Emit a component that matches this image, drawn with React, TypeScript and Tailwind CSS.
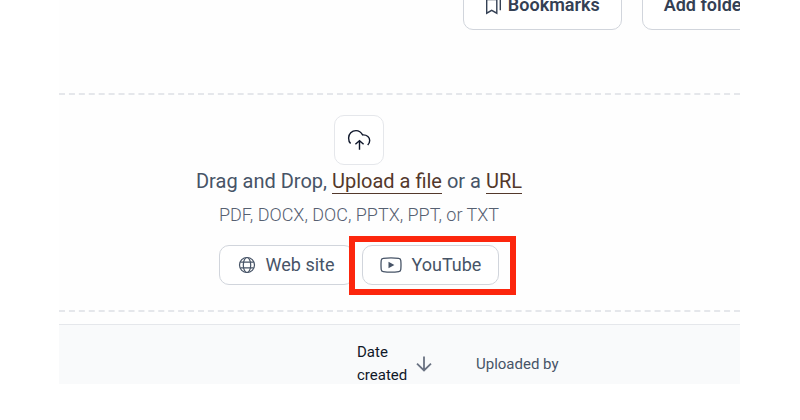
import React from "react";

const CloudUploadIcon = () => (
    <svg width="24" height="24" viewBox="0 0 24 24" fill="none" stroke="currentColor" strokeWidth="1.4" aria-hidden="true">
        <path d="M3.6 15.6C2 14 1.6 12 1.6 9.9C1.6 6.1 4.8 2.6 9 2.6C12.1 2.6 14.2 4.2 15.6 6.9C20.2 6.6 22.7 9.4 22.7 12.4C22.7 14.2 22 15.6 20.7 17" />
        <path d="M12.5 21.8V12.8M8.4 16.2L12.5 12.6L16.6 16.2" />
    </svg>
);

const BookmarksIcon = () => (
    <svg width="17" height="20" viewBox="0 0 17 20" fill="none" stroke="currentColor" strokeWidth="1.4" aria-hidden="true">
        <path d="M1.7 4.5H11.8V18.2L6.7 15.4L1.7 18.2Z" />
        <path d="M4.5 1.7H15.3V15.2" />
    </svg>
);

const GlobeIcon = () => (
    <svg width="18" height="18" viewBox="0 0 18 18" fill="none" stroke="currentColor" strokeWidth="1.2" aria-hidden="true">
        <circle cx="9" cy="9" r="7.5" />
        <ellipse cx="9" cy="9" rx="3.7" ry="7.5" />
        <path d="M2.3 6.2H15.7M2.3 11.8H15.7" />
    </svg>
);

const YouTubeIcon = () => (
    <svg width="22" height="16" viewBox="0 0 22 16" fill="none" stroke="currentColor" strokeWidth="1.3" aria-hidden="true">
        <path d="M3.2 1.4Q11 .3 18.8 1.4Q20.6 1.6 20.8 3.5Q21.2 8 20.8 12.5Q20.6 14.4 18.8 14.6Q11 15.7 3.2 14.6Q1.4 14.4 1.2 12.5Q.8 8 1.2 3.5Q1.4 1.6 3.2 1.4Z" />
        <path d="M8.5 4.8L14.4 8L8.5 11.2Z" fill="currentColor" stroke="none" />
    </svg>
);

const ArrowDownIcon = () => (
    <svg width="16" height="16" viewBox="0 0 16 16" fill="none" stroke="currentColor" strokeWidth="1.8" aria-hidden="true">
        <path d="M8 .5V14.6M1 7.6L8 14.4L15 7.6" />
    </svg>
);

export default function App() {
    return (
        <div className="pl-[59px] pr-[60px] font-[Roboto,sans-serif] text-[#475467]">
            <main className="flex flex-col overflow-hidden bg-[#fefefe]">
                <header className="-mt-[20px] -mr-[30px] mb-[63px] flex justify-end gap-5 text-lg font-semibold text-[#344054]">
                    <button type="button" className="flex h-[50px] shrink-0 items-center gap-[6px] rounded-[10px] border border-gray-300 bg-white px-[21px]">
                        <BookmarksIcon />
                        Bookmarks
                    </button>
                    <button type="button" className="flex h-[50px] shrink-0 items-center rounded-[10px] border border-gray-300 bg-white px-[21px]">
                        Add folder
                    </button>
                </header>

                <section className="mb-3 flex flex-col items-center border-y-2 border-dashed border-gray-200 pt-5 pr-[81px] pb-[25px]">
                    <div className="flex size-[50px] items-center justify-center rounded-[10px] border border-gray-200 bg-white text-slate-900">
                        <CloudUploadIcon />
                    </div>
                    <p className="text-xl leading-8">
                        Drag and Drop,{" "}
                        <a href="#file" className="border-b border-[#53382b] text-[#53382b]">Upload a file</a> or a{" "}
                        <a href="#url" className="border-b border-[#53382b] text-[#53382b]">URL</a>
                    </p>
                    <p className="mb-3 text-lg leading-9 font-light text-[#566071]">PDF, DOCX, DOC, PPTX, PPT, or TXT</p>
                    <div className="flex gap-2 text-lg">
                        <button type="button" className="flex h-10 items-center gap-[10px] rounded-[10px] border border-gray-300 bg-white px-[18px]">
                            <GlobeIcon />
                            Web site
                        </button>
                        <div className="relative">
                            <button type="button" className="flex h-10 items-center gap-[10px] rounded-[10px] border border-gray-300 bg-white px-[17px]">
                                <YouTubeIcon />
                                YouTube
                            </button>
                            <div className="pointer-events-none absolute -top-[9px] -right-[17px] -bottom-[10px] -left-[13px] border-6 border-[#fc260d]" />
                        </div>
                    </div>
                </section>

                <table className="-mb-[3px] w-full table-fixed border-t border-gray-200 bg-[#f9fafb] text-left text-[15px] leading-[23px]">
                    <thead>
                        <tr>
                            <th className="w-[298px]" aria-label="Name" />
                            <th scope="col" className="w-[119px] pt-4 font-normal text-gray-900">
                                <div className="flex items-center gap-2">
                                    <span className="w-[51px]">Date created</span>
                                    <span className="text-gray-500">
                                        <ArrowDownIcon />
                                    </span>
                                </div>
                            </th>
                            <th scope="col" className="pt-4 font-normal">Uploaded by</th>
                        </tr>
                    </thead>
                </table>
            </main>
        </div>
    );
}
